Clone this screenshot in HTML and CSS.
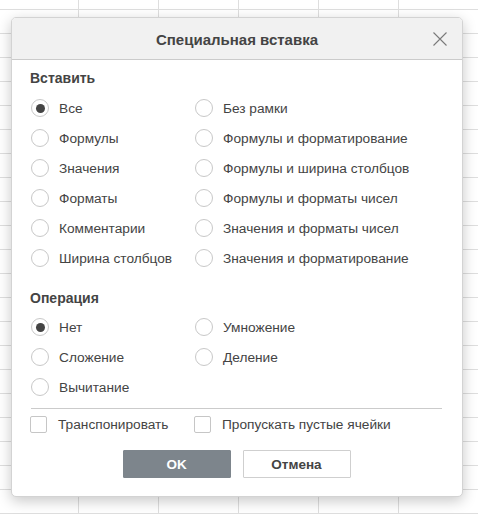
FILE: index.html
```html
<!DOCTYPE html>
<html lang="ru">
<head>
<meta charset="utf-8">
<title>Специальная вставка</title>
<link rel="stylesheet" href="styles.css">
</head>
<body>
<div class="sheet">
  <div class="dialog">
    <div class="dlg-header">
      <span class="dlg-title">Специальная вставка</span>
      <span class="dlg-close">
        <svg width="14" height="14" viewBox="0 0 14 14"><path d="M0.5 0.5L13.5 13.5M13.5 0.5L0.5 13.5" stroke="#7a7a7a" stroke-width="1.1" fill="none"/></svg>
      </span>
    </div>
    <div class="dlg-body">
      <div class="section-title">Вставить</div>
      <div class="radio-grid">
        <label class="radio checked"><span class="dot"></span>Все</label>
        <label class="radio"><span class="dot"></span>Без рамки</label>
        <label class="radio"><span class="dot"></span>Формулы</label>
        <label class="radio"><span class="dot"></span>Формулы и форматирование</label>
        <label class="radio"><span class="dot"></span>Значения</label>
        <label class="radio"><span class="dot"></span>Формулы и ширина столбцов</label>
        <label class="radio"><span class="dot"></span>Форматы</label>
        <label class="radio"><span class="dot"></span>Формулы и форматы чисел</label>
        <label class="radio"><span class="dot"></span>Комментарии</label>
        <label class="radio"><span class="dot"></span>Значения и форматы чисел</label>
        <label class="radio"><span class="dot"></span>Ширина столбцов</label>
        <label class="radio"><span class="dot"></span>Значения и форматирование</label>
      </div>
      <div class="section-title op">Операция</div>
      <div class="radio-grid op-grid">
        <label class="radio checked"><span class="dot"></span>Нет</label>
        <label class="radio"><span class="dot"></span>Умножение</label>
        <label class="radio"><span class="dot"></span>Сложение</label>
        <label class="radio"><span class="dot"></span>Деление</label>
        <label class="radio"><span class="dot"></span>Вычитание</label>
      </div>
      <div class="separator"></div>
      <div class="check-row">
        <label class="check"><span class="box"></span>Транспонировать</label>
        <label class="check"><span class="box"></span>Пропускать пустые ячейки</label>
      </div>
      <div class="buttons">
        <button class="btn primary">OK</button>
        <button class="btn">Отмена</button>
      </div>
    </div>
  </div>
</div>
</body>
</html>
```
FILE: styles.css
```css
html, body {
  margin: 0;
  padding: 0;
}
body {
  width: 478px;
  height: 514px;
  overflow: hidden;
  font-family: "Liberation Sans", Arial, sans-serif;
  font-size: 13.7px;
  color: #444;
}
.sheet {
  width: 478px;
  height: 514px;
  background-color: #fff;
  background-image:
    linear-gradient(to right, #dedede 1px, transparent 1px),
    linear-gradient(to bottom, #dedede 1px, transparent 1px);
  background-size: 80px 24px, 80px 24px;
  background-position: 78px 0, 0 9px;
  padding: 17px 0 0 11px;
  box-sizing: border-box;
}
.dialog {
  width: 452px;
  height: 480px;
  box-sizing: border-box;
  background: #fff;
  border: 1px solid #d3d3d3;
  border-radius: 5px;
  box-shadow: 0 4px 14px rgba(0, 0, 0, 0.22);
  overflow: hidden;
}
.dlg-header {
  height: 41px;
  background: #f1f1f1;
  border-bottom: 1px solid #cbcbcb;
  display: flex;
  align-items: center;
  justify-content: center;
  position: relative;
}
.dlg-title {
  font-weight: bold;
  font-size: 15px;
  color: #444;
  padding-top: 2px;
}
.dlg-close {
  position: absolute;
  right: 15px;
  top: 14px;
  width: 14px;
  height: 14px;
  display: block;
}
.dlg-close svg { display: block; }
.dlg-body {
  padding: 9px 20px 0 18px;
}
.section-title {
  font-weight: bold;
  font-size: 14px;
  line-height: 18px;
  height: 18px;
}
.section-title.op {
  margin-top: 16px;
}
.radio-grid {
  display: grid;
  grid-template-columns: 164px auto;
  margin-top: 6px;
  padding-left: 1px;
}
.op-grid {
  margin-top: 5px;
}
.radio {
  display: flex;
  align-items: center;
  height: 30px;
  white-space: nowrap;
}
.radio .dot {
  width: 16px;
  height: 16px;
  border: 1px solid #c8c8c8;
  border-radius: 50%;
  margin-right: 10px;
  box-sizing: content-box;
  display: flex;
  align-items: center;
  justify-content: center;
  flex: none;
}
.radio.checked .dot::after {
  content: "";
  width: 9px;
  height: 9px;
  border-radius: 50%;
  background: #444;
}
.separator {
  height: 1px;
  background: #cbcbcb;
  margin-top: 6px;
  margin-left: 1px;
}
.check-row {
  display: grid;
  grid-template-columns: 164px auto;
  height: 30px;
}
.check {
  display: flex;
  align-items: center;
  white-space: nowrap;
}
.check .box {
  width: 15px;
  height: 15px;
  border: 1px solid #c6c6c6;
  border-radius: 2px;
  margin-right: 11px;
  flex: none;
}
.buttons {
  display: flex;
  justify-content: center;
  gap: 12px;
  margin-top: 11px;
  padding-left: 1px;
}
.btn {
  width: 108px;
  height: 28px;
  box-sizing: border-box;
  font-family: "Liberation Sans", Arial, sans-serif;
  font-size: 13.5px;
  font-weight: bold;
  color: #444;
  background: #fff;
  border: 1px solid #cfcfcf;
  border-radius: 1px;
  padding: 0;
}
.btn.primary {
  background: #7d858c;
  border-color: #7d858c;
  color: #fff;
}
```
